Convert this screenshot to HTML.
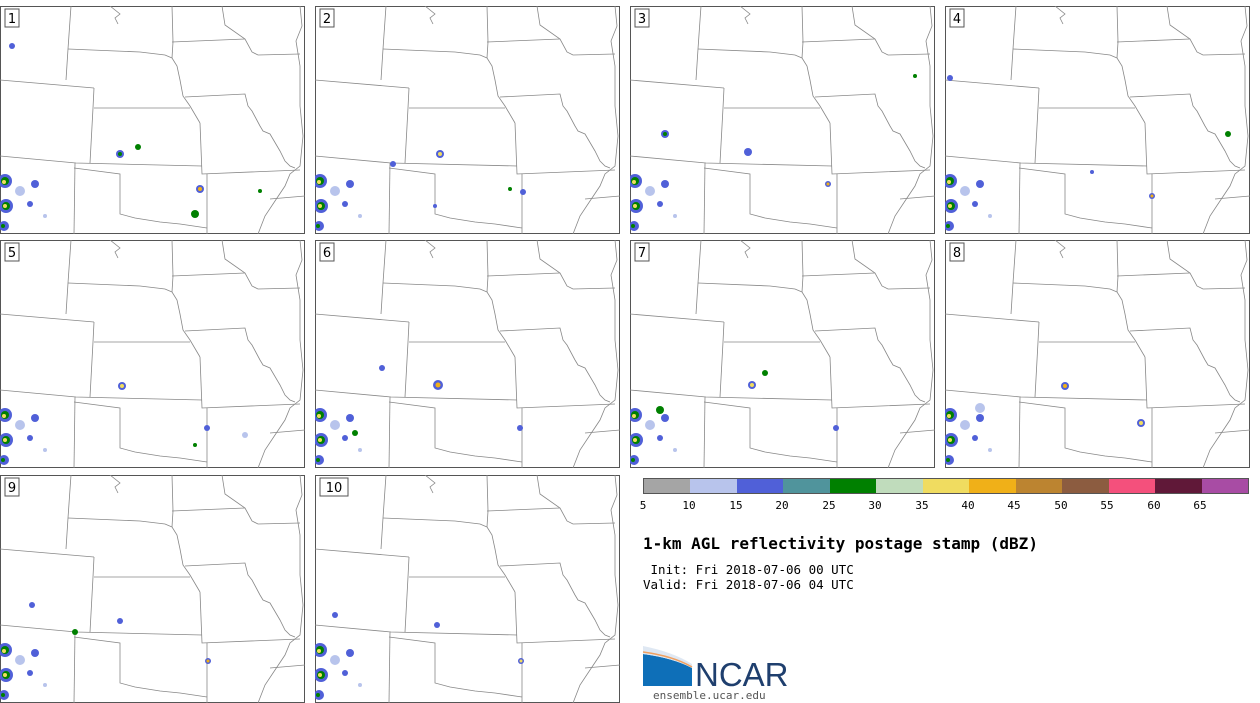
<!DOCTYPE html>
<html><head><meta charset="utf-8"><style>
body{margin:0;width:1260px;height:703px;background:#fff;position:relative;overflow:hidden;font-family:"DejaVu Sans Mono","Liberation Mono",monospace}
.p{position:absolute;width:305px;height:228px}
.cb{position:absolute;left:643px;top:478px;width:604px;height:14px;border:1px solid #555;display:flex}
.cb div{flex:1}
.tk{position:absolute;top:499px;font-size:11px;color:#000;transform:translateX(-50%)}
</style></head><body>
<svg width="0" height="0" style="position:absolute">
<defs>
<g id="map" fill="none" stroke="#888" stroke-width="0.8">
<path d="M71,0 L68,43 L66,74"/>
<path d="M0,74 L94,82"/>
<path d="M68,43 L140,46 L165,49 L172,52"/>
<path d="M172,0 L173,36 L172,52"/>
<path d="M172,36 L245,33"/>
<path d="M222,0 L225,19 L245,33 L252,46 L258,49 L300,48"/>
<path d="M172,52 L177,60 L180,74 L183,90 L190,100 L200,117"/>
<path d="M94,102 L190,102"/>
<path d="M94,82 L93,102 L90,157"/>
<path d="M185,91 L245,88 L248,100 L252,105 L260,120 L263,125 L270,128 L280,145 L285,155 L290,160 L295,162"/>
<path d="M200,117 L202,168 L300,164"/>
<path d="M0,150 L76,157 L202,160"/>
<path d="M75,157 L74,228"/>
<path d="M74,162 L120,168 L120,208 L135,212 L160,216 L180,218 L207,222"/>
<path d="M207,168 L207,228"/>
<path d="M300,0 L302,20 L296,35 L300,60 L300,100 L303,130 L300,160 L290,168 L285,180 L275,195 L265,210 L258,228"/>
<path d="M270,193 L305,190"/>
<path d="M110,0 L120,8 L115,12 L118,18"/>
</g>
<g id="w1">
<circle cx="5" cy="175" r="7" fill="#5060d8"/><circle cx="5" cy="175" r="4" fill="#008000"/><circle cx="4" cy="176" r="2" fill="#f0dc60"/>
<circle cx="6" cy="200" r="7" fill="#5060d8"/><circle cx="6" cy="200" r="4" fill="#008000"/><circle cx="5" cy="200" r="2" fill="#f0dc60"/>
<circle cx="20" cy="185" r="5" fill="#b8c4ec"/><circle cx="35" cy="178" r="4" fill="#5060d8"/>
<circle cx="4" cy="220" r="5" fill="#5060d8"/><circle cx="3" cy="220" r="2" fill="#008000"/>
<circle cx="30" cy="198" r="3" fill="#5060d8"/><circle cx="45" cy="210" r="2" fill="#b8c4ec"/>
</g>
</defs></svg>

<svg class="p" style="left:0;top:6px" viewBox="0 0 305 228"><rect x="0.5" y="0.5" width="304" height="227" fill="#fff" stroke="#555"/><use href="#map"/><use href="#w1"/><circle cx="120" cy="148" r="4" fill="#5060d8"/><circle cx="120" cy="148" r="2" fill="#008000"/><circle cx="138" cy="141" r="3" fill="#008000"/><circle cx="200" cy="183" r="4" fill="#5060d8"/><circle cx="200" cy="183" r="2" fill="#f0b018"/><circle cx="195" cy="208" r="4" fill="#008000"/><circle cx="12" cy="40" r="3" fill="#5060d8"/><circle cx="260" cy="185" r="2" fill="#008000"/><rect x="5" y="3" width="14" height="18" fill="#fff" stroke="#555"/><text x="12" y="17" font-size="13" text-anchor="middle" font-family="DejaVu Sans">1</text></svg>

<svg class="p" style="left:315px;top:6px" viewBox="0 0 305 228"><rect x="0.5" y="0.5" width="304" height="227" fill="#fff" stroke="#555"/><use href="#map"/><use href="#w1"/><circle cx="125" cy="148" r="4" fill="#5060d8"/><circle cx="125" cy="148" r="2" fill="#f0dc60"/><circle cx="208" cy="186" r="3" fill="#5060d8"/><circle cx="195" cy="183" r="2" fill="#008000"/><circle cx="120" cy="200" r="2" fill="#5060d8"/><circle cx="78" cy="158" r="3" fill="#5060d8"/><rect x="5" y="3" width="14" height="18" fill="#fff" stroke="#555"/><text x="12" y="17" font-size="13" text-anchor="middle" font-family="DejaVu Sans">2</text></svg>

<svg class="p" style="left:630px;top:6px" viewBox="0 0 305 228"><rect x="0.5" y="0.5" width="304" height="227" fill="#fff" stroke="#555"/><use href="#map"/><use href="#w1"/><circle cx="35" cy="128" r="4" fill="#5060d8"/><circle cx="35" cy="128" r="2" fill="#008000"/><circle cx="118" cy="146" r="4" fill="#5060d8"/><circle cx="198" cy="178" r="3" fill="#5060d8"/><circle cx="198" cy="178" r="1.5" fill="#f0b018"/><circle cx="285" cy="70" r="2" fill="#008000"/><rect x="5" y="3" width="14" height="18" fill="#fff" stroke="#555"/><text x="12" y="17" font-size="13" text-anchor="middle" font-family="DejaVu Sans">3</text></svg>

<svg class="p" style="left:945px;top:6px" viewBox="0 0 305 228"><rect x="0.5" y="0.5" width="304" height="227" fill="#fff" stroke="#555"/><use href="#map"/><use href="#w1"/><circle cx="5" cy="72" r="3" fill="#5060d8"/><circle cx="207" cy="190" r="3" fill="#5060d8"/><circle cx="207" cy="190" r="1.5" fill="#f0b018"/><circle cx="283" cy="128" r="3" fill="#008000"/><circle cx="147" cy="166" r="2" fill="#5060d8"/><rect x="5" y="3" width="14" height="18" fill="#fff" stroke="#555"/><text x="12" y="17" font-size="13" text-anchor="middle" font-family="DejaVu Sans">4</text></svg>

<svg class="p" style="left:0;top:240px" viewBox="0 0 305 228"><rect x="0.5" y="0.5" width="304" height="227" fill="#fff" stroke="#555"/><use href="#map"/><use href="#w1"/><circle cx="122" cy="146" r="4" fill="#5060d8"/><circle cx="122" cy="146" r="2" fill="#f0dc60"/><circle cx="207" cy="188" r="3" fill="#5060d8"/><circle cx="195" cy="205" r="2" fill="#008000"/><circle cx="245" cy="195" r="3" fill="#b8c4ec"/><rect x="5" y="3" width="14" height="18" fill="#fff" stroke="#555"/><text x="12" y="17" font-size="13" text-anchor="middle" font-family="DejaVu Sans">5</text></svg>

<svg class="p" style="left:315px;top:240px" viewBox="0 0 305 228"><rect x="0.5" y="0.5" width="304" height="227" fill="#fff" stroke="#555"/><use href="#map"/><use href="#w1"/><circle cx="123" cy="145" r="5" fill="#5060d8"/><circle cx="123" cy="145" r="2.5" fill="#f0b018"/><circle cx="205" cy="188" r="3" fill="#5060d8"/><circle cx="40" cy="193" r="3" fill="#008000"/><circle cx="67" cy="128" r="3" fill="#5060d8"/><rect x="5" y="3" width="14" height="18" fill="#fff" stroke="#555"/><text x="12" y="17" font-size="13" text-anchor="middle" font-family="DejaVu Sans">6</text></svg>

<svg class="p" style="left:630px;top:240px" viewBox="0 0 305 228"><rect x="0.5" y="0.5" width="304" height="227" fill="#fff" stroke="#555"/><use href="#map"/><use href="#w1"/><circle cx="122" cy="145" r="4" fill="#5060d8"/><circle cx="122" cy="145" r="2" fill="#f0dc60"/><circle cx="135" cy="133" r="3" fill="#008000"/><circle cx="206" cy="188" r="3" fill="#5060d8"/><circle cx="30" cy="170" r="4" fill="#008000"/><rect x="5" y="3" width="14" height="18" fill="#fff" stroke="#555"/><text x="12" y="17" font-size="13" text-anchor="middle" font-family="DejaVu Sans">7</text></svg>

<svg class="p" style="left:945px;top:240px" viewBox="0 0 305 228"><rect x="0.5" y="0.5" width="304" height="227" fill="#fff" stroke="#555"/><use href="#map"/><use href="#w1"/><circle cx="120" cy="146" r="4" fill="#5060d8"/><circle cx="120" cy="146" r="2" fill="#f0b018"/><circle cx="196" cy="183" r="4" fill="#5060d8"/><circle cx="196" cy="183" r="2" fill="#f0dc60"/><circle cx="35" cy="168" r="5" fill="#b8c4ec"/><rect x="5" y="3" width="14" height="18" fill="#fff" stroke="#555"/><text x="12" y="17" font-size="13" text-anchor="middle" font-family="DejaVu Sans">8</text></svg>

<svg class="p" style="left:0;top:475px" viewBox="0 0 305 228"><rect x="0.5" y="0.5" width="304" height="227" fill="#fff" stroke="#555"/><use href="#map"/><use href="#w1"/><circle cx="120" cy="146" r="3" fill="#5060d8"/><circle cx="208" cy="186" r="3" fill="#5060d8"/><circle cx="208" cy="186" r="1.5" fill="#f0b018"/><circle cx="75" cy="157" r="3" fill="#008000"/><circle cx="32" cy="130" r="3" fill="#5060d8"/><rect x="5" y="3" width="14" height="18" fill="#fff" stroke="#555"/><text x="12" y="17" font-size="13" text-anchor="middle" font-family="DejaVu Sans">9</text></svg>

<svg class="p" style="left:315px;top:475px" viewBox="0 0 305 228"><rect x="0.5" y="0.5" width="304" height="227" fill="#fff" stroke="#555"/><use href="#map"/><use href="#w1"/><circle cx="122" cy="150" r="3" fill="#5060d8"/><circle cx="206" cy="186" r="3" fill="#5060d8"/><circle cx="206" cy="186" r="1.5" fill="#f0dc60"/><circle cx="20" cy="140" r="3" fill="#5060d8"/><rect x="5" y="3" width="28" height="18" fill="#fff" stroke="#555"/><text x="19" y="17" font-size="13" text-anchor="middle" font-family="DejaVu Sans">10</text></svg>

<div class="cb">
<div style="background:#a5a5a5"></div><div style="background:#b8c4ec"></div><div style="background:#5060d8"></div><div style="background:#50949c"></div><div style="background:#008000"></div><div style="background:#c0dcbc"></div><div style="background:#f0dc60"></div><div style="background:#f0b018"></div><div style="background:#bc8430"></div><div style="background:#8c5c40"></div><div style="background:#f4507c"></div><div style="background:#601838"></div><div style="background:#a84ca4"></div>
</div>
<div class="tk" style="left:643px">5</div><div class="tk" style="left:689px">10</div><div class="tk" style="left:736px">15</div><div class="tk" style="left:782px">20</div><div class="tk" style="left:829px">25</div><div class="tk" style="left:875px">30</div><div class="tk" style="left:922px">35</div><div class="tk" style="left:968px">40</div><div class="tk" style="left:1014px">45</div><div class="tk" style="left:1061px">50</div><div class="tk" style="left:1107px">55</div><div class="tk" style="left:1154px">60</div><div class="tk" style="left:1200px">65</div>

<div style="position:absolute;left:643px;top:534px;font-size:16px;font-weight:bold;color:#000">1-km AGL reflectivity postage stamp (dBZ)</div>
<div style="position:absolute;left:643px;top:562px;font-size:12.5px;line-height:15px;white-space:pre;color:#000"> Init: Fri 2018-07-06 00 UTC
Valid: Fri 2018-07-06 04 UTC</div>

<svg style="position:absolute;left:643px;top:646px" width="150" height="42" viewBox="0 0 150 42">
<path d="M0,8 Q30,12 49,22 L49,40 L0,40 Z" fill="#0e6fb8"/>
<path d="M0,0 Q30,6 49,18 L49,22 Q30,12 0,8 Z" fill="#dfe8f3"/>
<path d="M0,6 Q30,10 49,21" stroke="#f0a060" stroke-width="1.5" fill="none"/>
<text x="52" y="40" font-family="Liberation Sans,sans-serif" font-size="33" fill="#1f3f6e">NCAR</text>
</svg>
<div style="position:absolute;left:653px;top:689px;font-size:11px;color:#555">ensemble.ucar.edu</div>
</body></html>
